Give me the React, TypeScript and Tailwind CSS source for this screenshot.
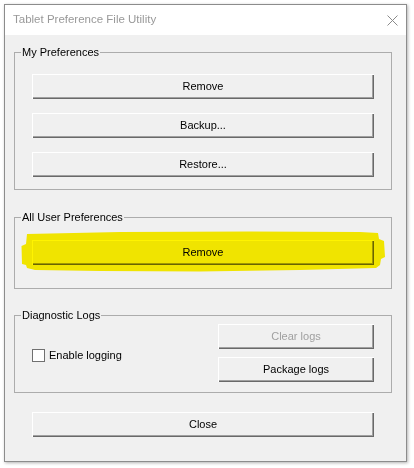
import React, { useState } from 'react';

const btn =
  'flex h-[25px] items-center justify-center bg-[#f0f0f0] shadow-[inset_1px_1px_0_#ffffff,inset_-1px_-1px_0_#696969,inset_-2px_-2px_0_#a0a0a0]';

interface GroupProps {
  title: string;
  className?: string;
  children: React.ReactNode;
}

const Group: React.FC<GroupProps> = ({ title, className, children }) => (
  <fieldset className="m-0 w-[378px] border border-[#acacac] p-0">
    <legend className="ml-[6px] px-[1px] leading-[15px] text-black">
      {title}
    </legend>
    <div className={className}>{children}</div>
  </fieldset>
);

const Highlight: React.FC = () => (
  // marker stroke drawn over the button
  <svg
    className="pointer-events-none absolute left-[-12px] top-[-10px] mix-blend-multiply"
    width="370"
    height="44"
    viewBox="20 230 370 44"
  >
    <path
      d="M27 234 L120 232 L250 231.5 L360 232 L378 233 L379 239 L384 241 L385 257 L381 259 L380 265 L376 268 L300 270 L200 271.5 L100 271 L35 270 L27 268 L26 265 L22 264 L21.5 246 L26 244 Z"
      fill="#fff300"
    />
  </svg>
);

const App: React.FC = () => {
  const [logging, setLogging] = useState(false);

  return (
    <div className="h-[468px] w-[414px] bg-white pl-[4px] pt-[4px] font-['Liberation_Sans',Arial,sans-serif] text-[11px] text-black">
      <div className="flex h-[458px] w-[403px] flex-col border border-[#8c8c8c] shadow-[1px_1px_3px_rgba(0,0,0,0.3)]">
        {/* Title bar */}
        <div className="flex h-[30px] items-center justify-between bg-white pl-[8px] pr-[8px]">
          <span className="text-[11.5px] text-[#999999]">
            Tablet Preference File Utility
          </span>
          <svg width="11" height="11" viewBox="0 0 11 11">
            <path
              d="M0.5 0.5 L10.5 10.5 M10.5 0.5 L0.5 10.5"
              stroke="#8a8a8a"
              strokeWidth="1"
            />
          </svg>
        </div>

        {/* Body */}
        <div className="flex flex-1 flex-col bg-[#f0f0f0] pl-[9px] pt-[10px]">
          <Group
            title="My Preferences"
            className="flex flex-col gap-[14px] px-[17px] pb-[12px] pt-[14px]"
          >
            <button className={btn}>Remove</button>
            <button className={btn}>Backup...</button>
            <button className={btn}>Restore...</button>
          </Group>

          <div className="mt-[20px]">
            <Group
              title="All User Preferences"
              className="px-[17px] pb-[23px] pt-[15px]"
            >
              <div className="relative">
                <button className={`${btn} w-full`}>Remove</button>
                <Highlight />
              </div>
            </Group>
          </div>

          <div className="mt-[19px]">
            <Group
              title="Diagnostic Logs"
              className="flex items-start justify-between px-[17px] pb-[10px] pt-[1px]"
            >
              <label className="mt-[25px] flex items-center gap-[4px]">
                <span
                  onClick={() => setLogging(!logging)}
                  className="flex h-[13px] w-[13px] items-center justify-center border border-[#707070] bg-white"
                >
                  {logging && (
                    <svg width="9" height="9" viewBox="0 0 9 9">
                      <path d="M1 4.5 L3.5 7 L8 1.5" stroke="#000" fill="none" />
                    </svg>
                  )}
                </span>
                <span className="leading-[13px]">Enable logging</span>
              </label>
              <div className="flex w-[156px] flex-col gap-[8px]">
                <button className={`${btn} text-[#a0a0a0]`} disabled>
                  Clear logs
                </button>
                <button className={btn}>Package logs</button>
              </div>
            </Group>
          </div>

          <button className={`${btn} ml-[18px] mt-[19px] w-[342px]`}>Close</button>
        </div>
      </div>
    </div>
  );
};

export default App;
